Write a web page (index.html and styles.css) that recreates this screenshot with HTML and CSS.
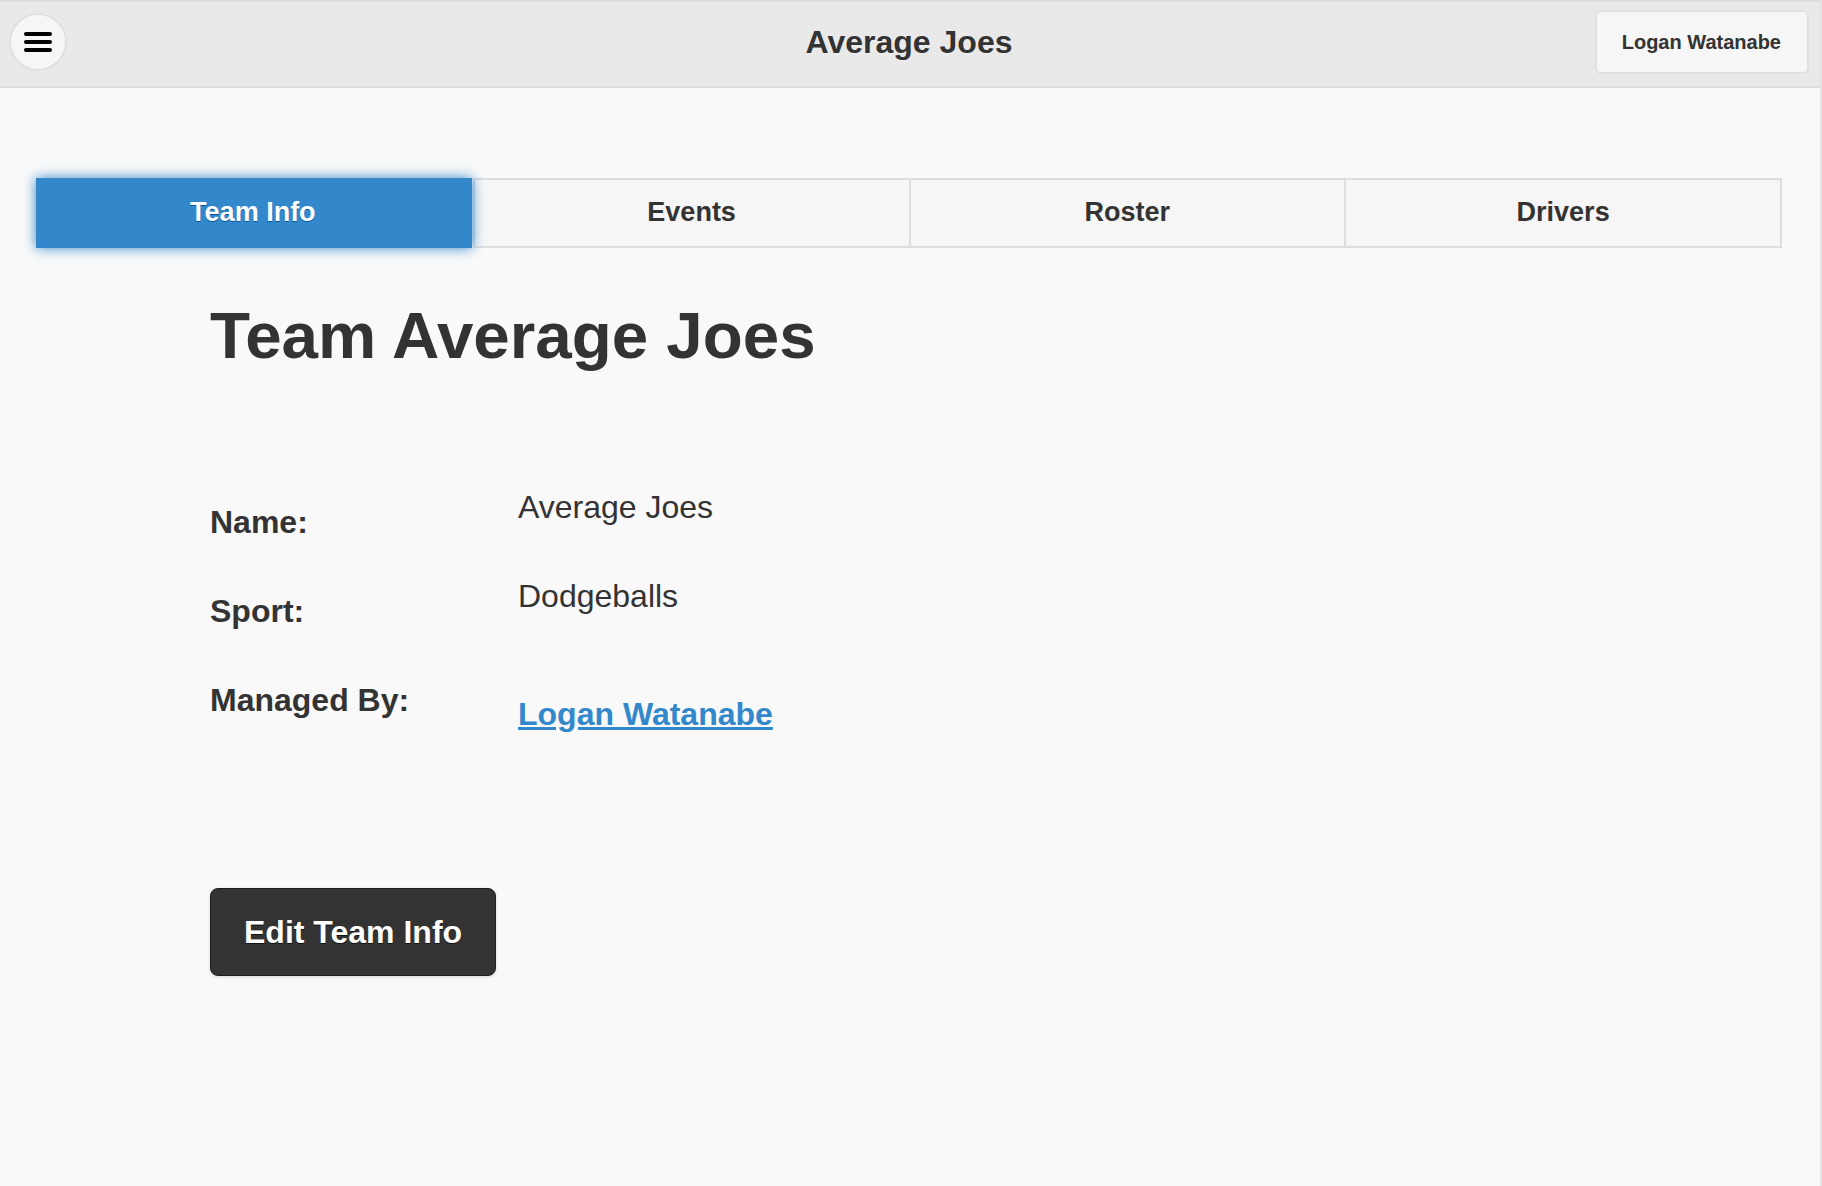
FILE: index.html
```html
<!DOCTYPE html>
<html lang="en">
<head>
<meta charset="utf-8">
<title>Average Joes</title>
<link rel="stylesheet" href="styles.css">
</head>
<body>
<div class="page">
  <header class="header">
    <div class="header-left">
      <button class="menu-btn" aria-label="Menu">
        <svg width="28" height="22" viewBox="0 0 28 22">
          <rect x="0" y="1" width="28" height="4" rx="2" fill="#000"/>
          <rect x="0" y="9" width="28" height="4" rx="2" fill="#000"/>
          <rect x="0" y="17" width="28" height="4" rx="2" fill="#000"/>
        </svg>
      </button>
    </div>
    <h1 class="header-title">Average Joes</h1>
    <div class="header-right">
      <a class="user-btn" href="#">Logan Watanabe</a>
    </div>
  </header>

  <main class="main">
    <nav class="navbar">
      <a class="tab tab-active" href="#">Team Info</a>
      <a class="tab" href="#">Events</a>
      <a class="tab" href="#">Roster</a>
      <a class="tab" href="#">Drivers</a>
    </nav>

    <section class="team">
      <h2 class="team-title">Team Average Joes</h2>
      <div class="details">
        <div class="label">Name:</div>
        <div class="value">Average Joes</div>
        <div class="label">Sport:</div>
        <div class="value">Dodgeballs</div>
        <div class="label">Managed By:</div>
        <div class="value value-link"><a href="#">Logan Watanabe</a></div>
      </div>
      <a class="edit-btn" href="#">Edit Team Info</a>
    </section>
  </main>
</div>
</body>
</html>
```

FILE: styles.css
```css
* {
  box-sizing: border-box;
}

html, body {
  margin: 0;
  padding: 0;
  background: #f9f9f9;
}

body {
  font-family: "Liberation Sans", Arial, Helvetica, sans-serif;
  color: #333;
}

.page {
  min-height: 1186px;
  border-right: 2px solid #e4e4e4;
}

/* Header */
.header {
  height: 88px;
  background: #e9e9e9;
  border-top: 2px solid #dddddd;
  border-bottom: 2px solid #dddddd;
  display: grid;
  grid-template-columns: 1fr auto 1fr;
  align-items: center;
  padding: 0 11px 4px 9px;
}

.header-left {
  display: flex;
  justify-content: flex-start;
}

.header-right {
  display: flex;
  justify-content: flex-end;
}

.menu-btn {
  width: 58px;
  height: 58px;
  border-radius: 50%;
  background: #f6f6f6;
  border: 2px solid #e0e0e0;
  display: flex;
  align-items: center;
  justify-content: center;
  padding: 0;
  margin: 0;
}

.menu-btn svg {
  display: block;
}

.header-title {
  margin: 0;
  font-size: 32px;
  line-height: 1;
  font-weight: bold;
  color: #333;
  text-shadow: 0 1px 0 #eee;
}

.user-btn {
  display: flex;
  align-items: center;
  justify-content: center;
  height: 64px;
  padding: 0 26px 0 25px;
  background: #f6f6f6;
  border: 2px solid #e0e0e0;
  border-radius: 6px;
  font-size: 20px;
  font-weight: bold;
  color: #333;
  text-decoration: none;
  text-shadow: 0 1px 0 #f3f3f3;
}

/* Navbar */
.navbar {
  display: flex;
  margin: 90px 38px 0 36px;
  height: 70px;
}

.tab {
  flex: 1 1 0;
  display: flex;
  align-items: center;
  justify-content: center;
  background: #f6f6f6;
  border: 2px solid #dddddd;
  border-left-width: 0;
  font-size: 27px;
  font-weight: bold;
  color: #333;
  text-decoration: none;
  text-shadow: 0 1px 0 #f3f3f3;
  padding-bottom: 1px;
}

.tab-active + .tab {
  border-left-width: 2px;
  border-left-color: #dddddd;
  margin-left: 1px;
}

.tab-active {
  position: relative;
  z-index: 1;
  background: #3388cc;
  border-color: #3388cc;
  color: #fff;
  text-shadow: 0 1px 0 #005599;
  box-shadow: 0 0 12px #3388cc;
}

/* Team content */
.team {
  padding-left: 210px;
}

.team-title {
  margin: 50px 0 0 0;
  font-size: 65.5px;
  line-height: 76px;
  font-weight: bold;
  color: #333;
}

.details {
  margin-top: 113px;
  display: grid;
  grid-template-columns: 308px 1fr;
  grid-auto-rows: 89px;
}

.label {
  font-size: 32px;
  line-height: 40px;
  font-weight: bold;
  padding-top: 15px;
}

.value {
  font-size: 32px;
  line-height: 40px;
  font-weight: normal;
}

.value-link {
  padding-top: 29px;
}

.value-link a {
  color: #3388cc;
  font-weight: bold;
  text-decoration: underline;
}

.edit-btn {
  display: inline-block;
  margin-top: 134px;
  padding: 23px 33px;
  line-height: 40px;
  font-size: 32px;
  font-weight: bold;
  color: #fff;
  background: #333;
  border: 1px solid #1f1f1f;
  border-radius: 8px;
  text-decoration: none;
  text-shadow: 0 1px 0 #111;
  box-shadow: 0 1px 3px rgba(0, 0, 0, 0.15);
}
```
